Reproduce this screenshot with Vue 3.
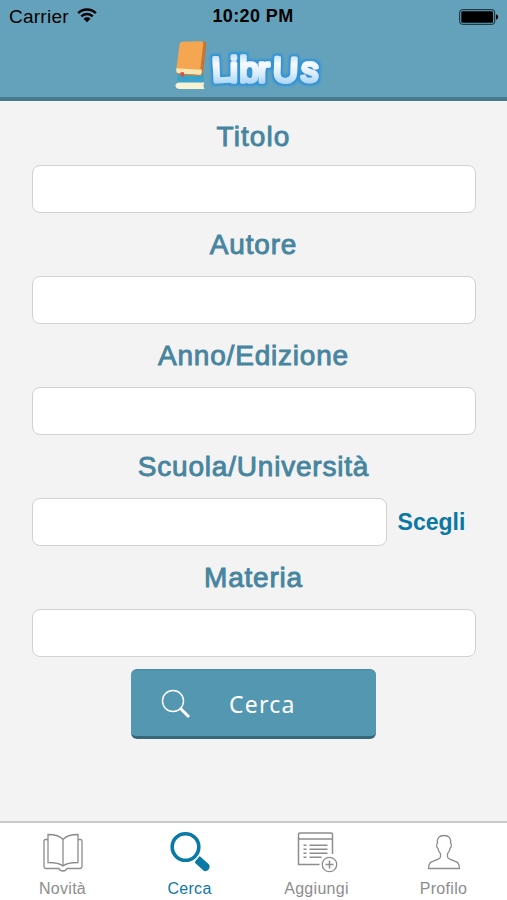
<script setup>
import { ref, reactive } from 'vue'

const fields = [
  { key: 'titolo', label: 'Titolo' },
  { key: 'autore', label: 'Autore' },
  { key: 'anno', label: 'Anno/Edizione' },
  { key: 'scuola', label: 'Scuola/Università', choose: true },
  { key: 'materia', label: 'Materia' }
]

const form = reactive({ titolo: '', autore: '', anno: '', scuola: '', materia: '' })

const tabs = [
  { id: 'novita', label: 'Novità' },
  { id: 'cerca', label: 'Cerca' },
  { id: 'aggiungi', label: 'Aggiungi' },
  { id: 'profilo', label: 'Profilo' }
]

const activeTab = ref('cerca')
</script>

<template>
  <div class="app">
    <header class="header">
      <div class="status-bar">
        <div class="carrier">
          <span>Carrier</span>
          <svg class="wifi" width="20" height="15" viewBox="0 0 20 15">
            <path d="M1.2 5.2a12.4 12.4 0 0 1 17.6 0M4.3 8.4a8 8 0 0 1 11.4 0" fill="none" stroke="#000" stroke-width="2.4" />
            <path d="M6.5 10.8a5 5 0 0 1 7 0L10 14.3z" />
          </svg>
        </div>
        <span class="time">10:20 PM</span>
        <svg class="battery" width="40" height="16" viewBox="0 0 40 16">
          <rect x=".7" y=".7" width="35" height="14.6" rx="2.6" fill="none" stroke="#10242c" stroke-width="1" />
          <rect x="2.3" y="2.3" width="31.8" height="11.4" rx="1.2" />
          <path d="M37 5.3q2.2.5 2.2 2.7T37 10.7z" />
        </svg>
      </div>

      <svg class="logo" width="152" height="54" viewBox="0 0 152 54">
        <defs>
          <linearGradient id="shine" gradientUnits="userSpaceOnUse" x1="0" y1="16" x2="0" y2="46">
            <stop offset="0" stop-color="#c5e4fa" />
            <stop offset="0.3" stop-color="#f6fbff" />
            <stop offset="0.6" stop-color="#dceefc" />
            <stop offset="1" stop-color="#a6d3f5" />
          </linearGradient>
          <filter id="glow" x="-10%" y="-20%" width="120%" height="140%">
            <feMorphology in="SourceAlpha" operator="dilate" radius="2" result="fat" />
            <feGaussianBlur in="fat" stdDeviation="0.9" result="soft" />
            <feFlood flood-color="#2f93d8" />
            <feComposite in2="soft" operator="in" result="halo" />
            <feMerge>
              <feMergeNode in="halo" />
              <feMergeNode in="SourceGraphic" />
            </feMerge>
          </filter>
        </defs>
        <!-- blue book -->
        <path d="M4 34h26v10H6q-4-2-3-6z" fill="#3ba3c9" />
        <path d="M5 43.500h25.500q-2 3 0 6.500H5q-3.500-1-3.500-3.500T5 43.500z" fill="#f8f2d4" />
        <!-- orange book -->
        <path d="M28 2.500l2.500.3q2 .5 1.800 2.700L29 34q-.5 2.500-2.500 2.500l-1.500-6z" fill="#c8762f" />
        <path d="M2.800 28.500l24 1.500q2.500 3-.5 6L4 34.500q-3-2-1.200-6z" fill="#f7e6b4" />
        <path d="M2.500 34.500l11 1.300 13 .7" fill="none" stroke="#cc8138" stroke-width="1.200" />
        <path d="M5.600 5Q6 3 8 2.800l19-.6q2.500 0 2.300 2.300L26.300 30.800 2.500 29.200z" fill="#f5a650" />
        <path d="M6.500 33.200h3.500v5L8.200 36.700l-1.700 1z" fill="#d95040" />
        <text class="logo-text" x="38.500 56 65.500 84 98.500 126.500" y="43 43 43 43 42.500 42" rotate="-3 0 0 0 2 3" filter="url(#glow)">LibrUs</text>
      </svg>
    </header>

    <main class="form">
      <div v-for="f in fields" :key="f.key" class="field">
        <label :for="f.key">{{ f.label }}</label>
        <div class="input-row">
          <input :id="f.key" v-model="form[f.key]" type="text" />
          <button v-if="f.choose" class="choose-btn">Scegli</button>
        </div>
      </div>

      <button class="search-btn">
        <svg width="30" height="30" viewBox="0 0 30 30" fill="none" stroke="#fff">
          <circle cx="12" cy="12" r="10.500" stroke-width="1.400" />
          <path d="M19 19l9 9" stroke-width="3" />
        </svg>
        <span>Cerca</span>
      </button>
    </main>

    <nav class="tab-bar">
      <a
        v-for="tab in tabs"
        :key="tab.id"
        class="tab"
        :class="{ active: activeTab === tab.id }"
        @click="activeTab = tab.id"
      >
        <svg width="44" height="44" viewBox="0 0 44 44" fill="none" stroke="currentColor" stroke-width="1.300">
          <template v-if="tab.id === 'novita'">
            <path d="M22 9.500Q18 4.500 7 4.500v28q11 0 15 3.500 4-3.500 15-3.500v-28Q26 4.500 22 9.500zV36" />
            <path d="M7 9.500H4.500Q3 9.500 3 11.500V36q0 2.500 2 2.500h13q1 2.500 4 2.500t4-2.500h13q2 0 2-2.500V11.500q0-2-1.500-2H37" />
          </template>
          <template v-else-if="tab.id === 'cerca'">
            <circle cx="17.500" cy="17" r="13.300" stroke-width="3.600" />
            <path d="M32.200 26.500l8.600 7.700q1.500 1.600.5 4.300-1.700 3.200-5.300 2.500L27.200 33q-.6-.8 0-1.500l3.800-4.800q.6-.7 1.200-.2z" fill="currentColor" stroke="none" />
          </template>
          <template v-else-if="tab.id === 'aggiungi'">
            <path d="M24.500 34.500H3.500V4.500q0-1.500 1.500-1.500h31q1.500 0 1.500 1.500V24M3.500 9h34" stroke-width="1.500" />
            <path d="M8.500 15.300h3m3 0h18M8.500 19.300h3m3 0h18M8.500 23.300h3m3 0h18M8.500 27.300h3m3 0h12" stroke-width="1.500" />
            <circle cx="34.500" cy="34.500" r="7.200" />
            <path d="M30.500 34.500h8M34.500 30.500v8" stroke-width="1.500" />
          </template>
          <path
            v-else
            d="M6.500 38.500c.3-5.500 2-6.600 5.500-7.700 4-1.300 6.500-2 6.500-4v-3c-1.500-1.500-2.300-3.200-2.500-5.500-1.600-.8-1.800-4.500-.5-5.300C14.500 8.500 17 5.500 22 5.500s7.500 3 6.500 7.500c1.300.8 1.100 4.500-.5 5.300-.2 2.300-1 4-2.500 5.500v3c0 2 2.500 2.700 6.500 4 3.500 1.100 5.200 2.200 5.500 7.700z"
          />
        </svg>
        <span>{{ tab.label }}</span>
      </a>
    </nav>
  </div>
</template>

<style>
body {
  margin: 0;
}
</style>

<style scoped>
.app {
  height: 900px;
  display: flex;
  flex-direction: column;
  background: #f3f3f3;
  font-family: "Liberation Sans", Arial, sans-serif;
  overflow: hidden;
}

.header {
  height: 101px;
  box-sizing: border-box;
  background: #64a2bc;
  border-bottom: 4px solid #477a8c;
  display: flex;
  flex-direction: column;
  align-items: center;
}

.status-bar {
  width: 100%;
  height: 33px;
  box-sizing: border-box;
  padding: 0 8px 0 9px;
  display: grid;
  grid-template-columns: 1fr auto 1fr;
  align-items: center;
  font-size: 19px;
  flex-shrink: 0;
}

.carrier {
  display: flex;
  align-items: center;
  gap: 8px;
  letter-spacing: 0.25px;
}

.wifi {
  margin-top: -3px;
}

.time {
  margin-right: 2px;
  font-size: 18px;
  font-weight: bold;
  letter-spacing: 0.4px;
}

.battery {
  justify-self: end;
}

.logo {
  margin: 6px 7px 0 0;
}

.logo-text {
  font-family: "Liberation Sans", Arial, sans-serif;
  font-size: 35px;
  fill: url(#shine);
  stroke: url(#shine);
  stroke-width: 3.4px;
  stroke-linejoin: round;
}

.form {
  flex: 1;
  display: flex;
  flex-direction: column;
  padding: 0 31.5px;
}

.field label {
  display: block;
  line-height: 63px;
  text-align: center;
  font-size: 28px;
  letter-spacing: 0.8px;
  color: #47859f;
  -webkit-text-stroke: 0.9px #47859f;
}

.field:first-child label {
  padding-top: 7px;
  line-height: 57px;
  letter-spacing: 1.1px;
}

.input-row {
  display: flex;
  height: 48px;
}

.input-row input {
  flex: 1;
  min-width: 0;
  box-sizing: border-box;
  padding: 0 12px;
  border: 1px solid #d2d2d2;
  border-radius: 8px;
  background: #fff;
  font: inherit;
  font-size: 22px;
  outline: none;
}

.choose-btn {
  width: 89px;
  padding: 0 0 0 1px;
  border: none;
  background: none;
  color: #0b78a3;
  font: bold 23px "Liberation Sans", Arial, sans-serif;
  cursor: pointer;
}

.search-btn {
  width: 245px;
  height: 70px;
  margin-top: 12px;
  padding: 2px 0 0 30px;
  align-self: center;
  display: flex;
  align-items: center;
  gap: 38px;
  border: none;
  border-top: 1px solid #4689a2;
  border-bottom: 3px solid #38677a;
  border-radius: 6px;
  background: #5497b1;
  color: #fff;
  font-family: "Noto Sans", sans-serif;
  font-size: 23px;
  letter-spacing: 1.2px;
  cursor: pointer;
}

.tab-bar {
  height: 79px;
  box-sizing: border-box;
  display: grid;
  grid-template-columns: repeat(4, 127px);
  justify-content: center;
  padding-right: 1px;
  border-top: 2px solid #cacaca;
  background: #fff;
}

.tab {
  display: flex;
  flex-direction: column;
  align-items: center;
  padding-top: 7px;
  color: #8d8d8d;
  cursor: pointer;
}

.tab span {
  margin-top: 6px;
  font-size: 16px;
  line-height: 18px;
  letter-spacing: 0.3px;
}

.tab.active {
  color: #0b79a6;
}
</style>
